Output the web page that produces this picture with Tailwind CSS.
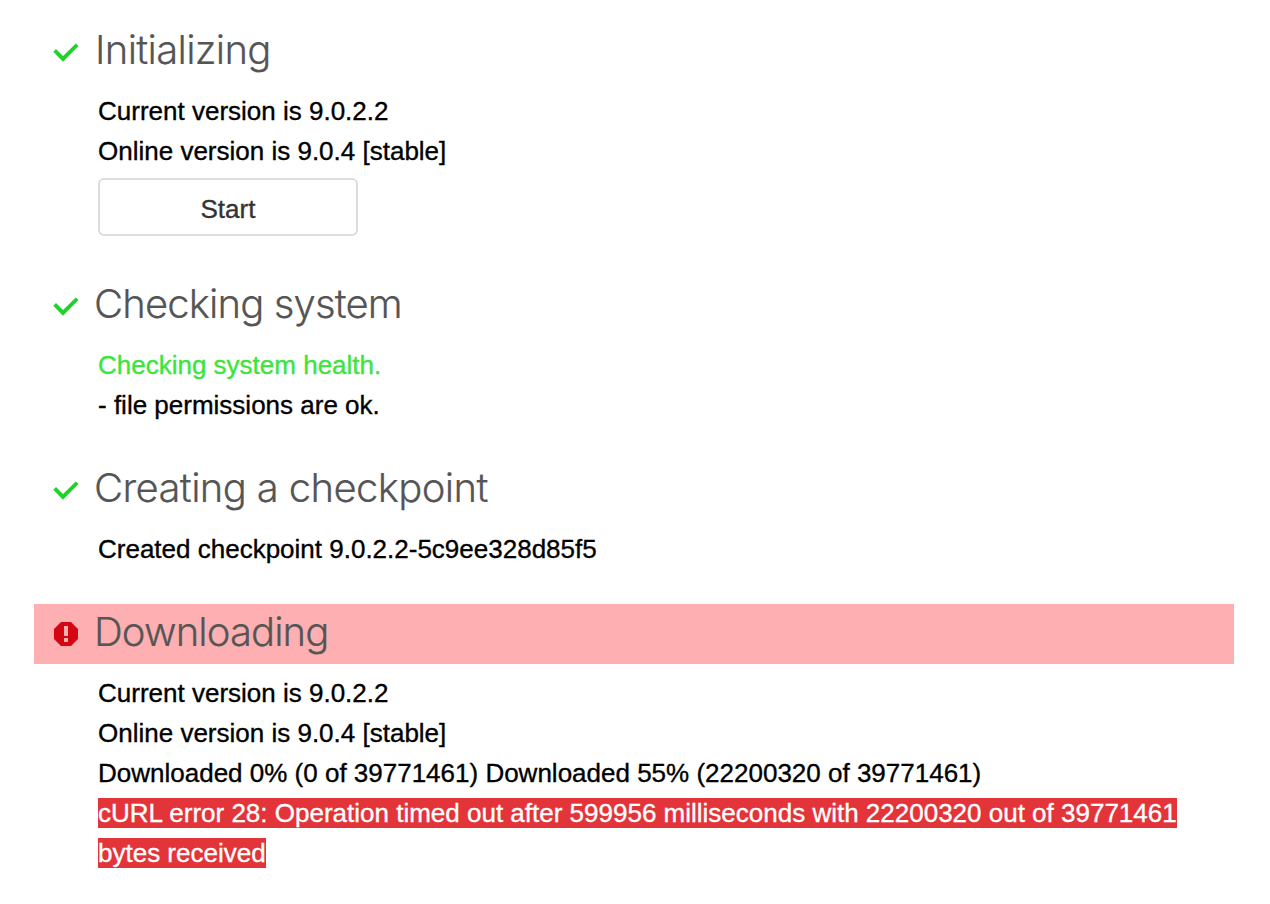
<!DOCTYPE html>
<html lang="en">
<head>
<meta charset="utf-8">
<title>Updater</title>
<script src="https://cdn.jsdelivr.net/npm/@tailwindcss/browser@4"></script>
</head>
<body class="bg-white text-black font-['Liberation_Sans',Arial,sans-serif] text-[26px] leading-[40px] [-webkit-text-stroke:0.35px]">
<main class="w-[1200px] h-[904px] ml-[34px] pt-[22px] overflow-hidden">
  <section class="h-[254px]">
    <div class="flex h-[60px] items-center pl-[16px]">
      <svg class="w-8 h-8 shrink-0" viewBox="0 0 32 32" fill="#1fd329"><path d="M3.3 15.7 6 13 13 20 25.8 7.4 28.5 10.1 13 25.7Z"/></svg>
      <h2 class="ml-[13px] pb-[4px] font-['Inter',sans-serif] font-light text-[40px] leading-[56px] text-[#555] tracking-[-0.68px] whitespace-nowrap [-webkit-text-stroke:0.2px]">Initializing</h2>
    </div>
    <div class="pl-16 pt-[9px]">
      <p>Current version is 9.0.2.2</p>
      <p>Online version is 9.0.4 [stable]</p>
      <button class="mt-[7px] flex w-[260px] h-[58px] items-center justify-center rounded-[6px] border-2 border-[#ddd] bg-white pt-[4px] text-[#333] [-webkit-text-stroke:0.35px]">Start</button>
    </div>
  </section>
  <section class="h-[184px]">
    <div class="flex h-[60px] items-center pl-[16px]">
      <svg class="w-8 h-8 shrink-0" viewBox="0 0 32 32" fill="#1fd329"><path d="M3.3 15.7 6 13 13 20 25.8 7.4 28.5 10.1 13 25.7Z"/></svg>
      <h2 class="ml-[12px] pb-[4px] font-['Inter',sans-serif] font-light text-[40px] leading-[56px] text-[#555] tracking-[-0.86px] whitespace-nowrap [-webkit-text-stroke:0.2px]">Checking system</h2>
    </div>
    <div class="pl-16 pt-[9px]">
      <p class="text-[#3be53b]">Checking system health.</p>
      <p>- file permissions are ok.</p>
    </div>
  </section>
  <section class="h-[144px]">
    <div class="flex h-[60px] items-center pl-[16px]">
      <svg class="w-8 h-8 shrink-0" viewBox="0 0 32 32" fill="#1fd329"><path d="M3.3 15.7 6 13 13 20 25.8 7.4 28.5 10.1 13 25.7Z"/></svg>
      <h2 class="ml-[12px] pb-[4px] font-['Inter',sans-serif] font-light text-[40px] leading-[56px] text-[#555] tracking-[-0.63px] whitespace-nowrap [-webkit-text-stroke:0.2px]">Creating a checkpoint</h2>
    </div>
    <div class="pl-16 pt-[9px]">
      <p>Created checkpoint 9.0.2.2-5c9ee328d85f5</p>
    </div>
  </section>
  <section>
    <div class="flex h-[60px] items-center pl-[16px] bg-[#fdafb1]">
      <svg class="w-8 h-8 shrink-0" viewBox="0 0 32 32"><path fill="#d40612" d="M11 4h10l7 7v10l-7 7H11l-7-7V11z"/><path fill="#fdafb1" d="M14 8h4v10h-4zM14 20h4v4h-4z"/></svg>
      <h2 class="ml-[12px] pb-[4px] font-['Inter',sans-serif] font-light text-[40px] leading-[56px] text-[#555] tracking-[-0.9px] whitespace-nowrap [-webkit-text-stroke:0.2px]">Downloading</h2>
    </div>
    <div class="pl-16 pt-[9px]">
      <p>Current version is 9.0.2.2</p>
      <p>Online version is 9.0.4 [stable]</p>
      <p>Downloaded 0% (0 of 39771461) Downloaded 55% (22200320 of 39771461)</p>
      <p><span class="bg-[#e33439] text-white">cURL error 28: Operation timed out after 599956 milliseconds with 22200320 out of 39771461<br>bytes received</span></p>
    </div>
  </section>
</main>
</body>
</html>
